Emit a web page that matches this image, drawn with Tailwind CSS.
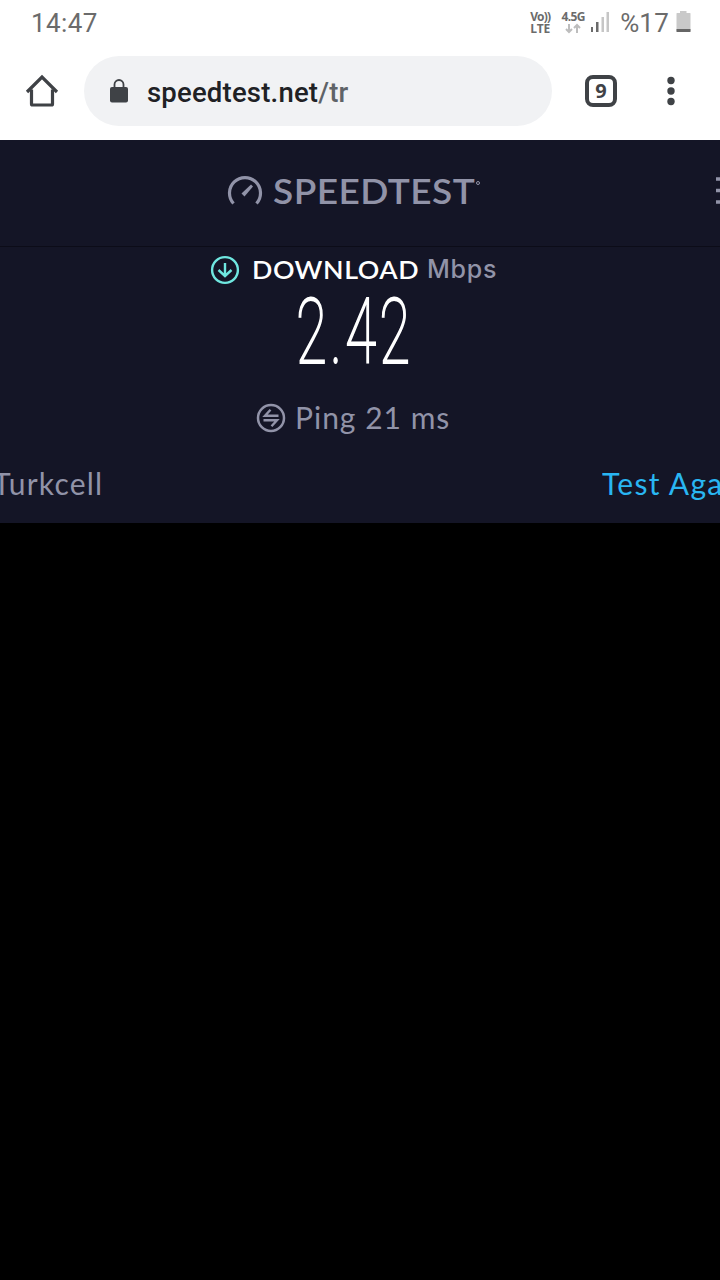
<!DOCTYPE html>
<html lang="tr">

<head>
  <meta charset="UTF-8">
  <meta name="viewport" content="width=device-width, initial-scale=1">
  <title>Speedtest</title>
  <script src="https://cdn.jsdelivr.net/npm/@tailwindcss/browser@4"></script>
</head>

<body class="min-h-screen bg-black overflow-hidden font-['Roboto',sans-serif]">

  <!-- Status bar -->
  <div class="h-[46px] bg-white flex items-center text-[#6b6b6b]">
    <span class="ml-[31px] text-[26px] leading-[46px] tracking-[0.4px]">14:47</span>
    <div class="ml-auto flex items-center pr-[29px]">
      <div class="w-[24px] mr-[8px] pb-[1px] text-[12px] leading-[12px] font-bold whitespace-nowrap font-['Open_Sans',sans-serif]">
        <div class="tracking-[-0.8px] pl-px">Vo))</div>
        <div class="tracking-[-0.2px] pl-px">LTE</div>
      </div>
      <div class="w-[24px] mr-[5px] pb-[1px] flex flex-col items-center">
        <span class="text-[12px] leading-[12px] font-bold tracking-[-0.7px] font-['Open_Sans',sans-serif]">4.5G</span>
        <svg class="w-[16px] h-[11px]" viewBox="0 0 16 11" fill="none" stroke="#bdbdbd" stroke-width="2">
          <path d="M4 1v8M1 6l3 3 3-3M12 10V2M9 5l3-3 3 3" />
        </svg>
      </div>
      <svg class="w-[20px] h-[22px] mr-[10px] mb-[2px]" viewBox="0 0 20 22">
        <path fill="#6b6b6b" d="M1 16h2v5H1zM6 11h2.500v10H6z" />
        <path fill="#c6c6c6" d="M11.500 6H14v15h-2.500zM16.500 1H19v20h-2.500z" />
      </svg>
      <span class="text-[26px] leading-[46px] tracking-[0.2px] mr-[7px]">%17</span>
      <svg class="w-[15px] h-[22px] mb-[2px]" viewBox="0 0 15 22">
        <path fill="#c9c9c9" d="M4 0h6.500v2H14a.5.5 0 0 1 .5.5V20H.5V2.500A.5.5 0 0 1 1 2h3z" />
        <path fill="#666" d="M.5 18h14v3H.5z" />
      </svg>
    </div>
  </div>

  <!-- Browser toolbar -->
  <div class="h-[94px] bg-white flex items-center pb-[4px]">
    <svg class="w-[34px] h-[34px] ml-[25px]" viewBox="0 0 34 34" fill="none" stroke="#3f4246" stroke-width="3.200">
      <path stroke-linejoin="round" d="M6.500 15.500v14.500a1 1 0 0 0 1 1h19a1 1 0 0 0 1-1V15.500" />
      <path d="M2 18 17 3l15 15" />
    </svg>
    <div class="ml-[25px] w-[468px] h-[70px] rounded-full bg-[#f1f2f4] flex items-center">
      <svg class="w-[18px] h-[24px] ml-[26px]" viewBox="0 0 18 24">
        <rect y="8" width="18" height="15.500" rx="2" fill="#3f4246" />
        <path d="M4.500 9V5.500a4.500 4.500 0 0 1 9 0V9" fill="none" stroke="#3f4246" stroke-width="1.800" />
      </svg>
      <span class="ml-[19px] text-[27.500px] font-medium text-[#202124] tracking-[0.200px] pt-[4px]">speedtest.net<span class="text-[#5f6368]">/tr</span></span>
    </div>
    <div class="ml-[33px] w-[32px] h-[32px] rounded-[8px] border-[4px] border-[#3f4246] flex items-center justify-center text-[20px] leading-none font-bold font-['Noto_Sans',sans-serif] text-[#3f4246]">9</div>
    <svg class="w-[8px] h-[30px] ml-[50px]" viewBox="0 0 8 30" fill="#3f4246">
      <circle cx="4" cy="4.500" r="3.700" />
      <circle cx="4" cy="15" r="3.700" />
      <circle cx="4" cy="25.500" r="3.700" />
    </svg>
  </div>

  <div class="h-[383px] bg-[#141526] text-[#9193a8] font-['Lato',sans-serif]">
    <!-- Site header -->
    <div class="h-[107px] border-b border-[#0c0c18] flex items-center pl-[227px] pb-[4px]">
      <svg class="w-[36px] h-[32px]" viewBox="0 0 36 32" fill="none" stroke="#9193a8">
        <path stroke-width="3.200" d="M6.500 28.500A15.500 15.500 0 1 1 29.500 28.500" />
        <path fill="#9193a8" stroke="none" d="M24 9.500 26 11.500 17.500 21.500 14.500 18.500z" />
      </svg>
      <span class="ml-[10px] w-[202px]"><span class="inline-block origin-left scale-x-[1.090] text-[34px] leading-[40px] font-semibold tracking-[0.400px] whitespace-nowrap">SPEEDTEST</span></span>
      <span class="ml-px w-[4px] h-[4px] mb-[17px] rounded-full border border-[#9193a8]"></span>
      <svg class="w-[4px] h-[30px] ml-auto" viewBox="0 0 4 30" stroke="#9193a8" stroke-width="3.500">
        <path d="M0 3h4M0 14.500h4M0 26h4" />
      </svg>
    </div>

    <!-- Result -->
    <div class="h-[45px] flex items-center pl-[210px]">
      <svg class="w-[30px] h-[30px]" viewBox="0 0 30 30" fill="none" stroke="#6fe7e0" stroke-width="2.400">
        <circle cx="15" cy="15" r="12.900" />
        <path d="M15 8v13M8.500 15l6.500 6 6.500-6" />
      </svg>
      <span class="ml-[12px] w-[175px] pb-[1px]"><span class="inline-block origin-left scale-x-[1.050] text-[25.500px] font-semibold text-white tracking-[0.500px] whitespace-nowrap">DOWNLOAD</span></span>
      <span class="text-[25px] font-medium tracking-[0.800px] font-['Inter',sans-serif]">Mbps</span>
    </div>
    <div class="h-[80px] pl-[296px]">
      <span class="inline-block origin-left scale-x-[0.620] font-['Roboto',sans-serif] font-thin text-[91px] leading-[80px] tracking-[5px] text-white [-webkit-text-stroke:2px_white]">2.42</span>
    </div>
    <div class="h-[92px] flex items-center pl-[256px]">
      <svg class="w-[30px] h-[30px]" viewBox="0 0 30 30" fill="none" stroke="#9193a8" stroke-width="2.500">
        <circle cx="15" cy="15" r="13" />
        <path stroke-width="2.400" d="M22.500 12.800H9l5.500-6M7.500 17.200H21l-5.500 6" />
      </svg>
      <span class="ml-[9px] pb-[2px] text-[30px] tracking-[1px]">Ping 21 ms</span>
    </div>
    <div class="h-[38px] flex items-center justify-between whitespace-nowrap text-[30px]">
      <span class="-ml-[7px] tracking-[1.200px]">Turkcell</span>
      <span class="w-[118px] overflow-hidden tracking-[1.300px] text-[#29b6f2]">Test Again</span>
    </div>
  </div>

</body>

</html>
